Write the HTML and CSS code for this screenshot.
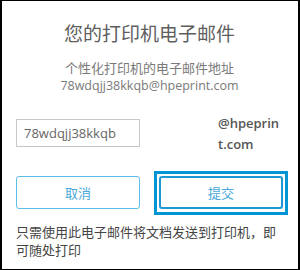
FILE: index.html
```html
<!DOCTYPE html>
<html lang="zh-CN">
<head>
    <meta charset="UTF-8">
    <meta name="viewport" content="width=device-width, initial-scale=1.0">
    <title>您的打印机电子邮件</title>
    <link rel="stylesheet" href="styles.css">
</head>
<body>
    <div class="dialog">
        <h1 class="title">您的打印机电子邮件</h1>
        <p class="subtitle">个性化打印机的电子邮件地址</p>
        <p class="current-email">78wdqjj38kkqb@hpeprint.com</p>

        <div class="email-row">
            <input class="email-input" type="text" value="78wdqjj38kkqb">
            <div class="email-suffix">@hpeprint.com</div>
        </div>

        <div class="actions">
            <button class="btn">取消</button>
            <button class="btn btn-submit">提交</button>
        </div>

        <p class="note">只需使用此电子邮件将文档发送到打印机，即可随处打印</p>
    </div>
</body>
</html>
```

FILE: styles.css
```css
* {
    margin: 0;
    padding: 0;
    box-sizing: border-box;
}

body {
    font-family: "Open Sans", "Noto Sans CJK SC", sans-serif;
    background: #ffffff;
}

.dialog {
    width: 300px;
    height: 270px;
    border-top: 1px solid #000;
    border-bottom: 1px solid #000;
    border-left: 2px solid #000;
    border-right: 2px solid #000;
    padding: 21px 15px 0 14px;
}

.title {
    font-size: 19px;
    line-height: 24px;
    font-weight: 400;
    color: #5e5e5e;
    text-align: center;
}

.subtitle,
.current-email {
    font-size: 13px;
    line-height: 17px;
    color: #7a7a7a;
    text-align: center;
}

.current-email {
    font-size: 12.5px;
}

.subtitle {
    margin-top: 14px;
}

.email-row {
    display: grid;
    grid-template-columns: 1fr 1fr;
    gap: 19px;
    margin-top: 25px;
    align-items: start;
}

.email-input {
    height: 28px;
    border: 1px solid #c8c8c8;
    padding: 0 7px;
    font-family: inherit;
    font-size: 13px;
    color: #666;
    outline: none;
    width: 100%;
}

.email-suffix {
    margin-top: -6px;
    padding-left: 59px;
    font-size: 13px;
    line-height: 21px;
    font-weight: 600;
    color: #555;
    word-break: break-all;
}

.actions {
    display: grid;
    grid-template-columns: 1fr 1fr;
    gap: 19px;
    margin-top: 21px;
}

.btn {
    position: relative;
    height: 33px;
    background: #fff;
    border: 1px solid #5cbfea;
    border-radius: 3px;
    font-family: inherit;
    font-size: 13px;
    color: #4aa9da;
}

.btn-submit {
    border: 2px solid #1e98d2;
}

.btn-submit::after {
    content: '';
    position: absolute;
    top: -7px;
    left: -7px;
    right: -7px;
    bottom: -8px;
    border: 3px solid #0096d6;
}

.note {
    margin-top: 14px;
    font-size: 13px;
    line-height: 18px;
    color: #444;
    padding-right: 2px;
}
```
